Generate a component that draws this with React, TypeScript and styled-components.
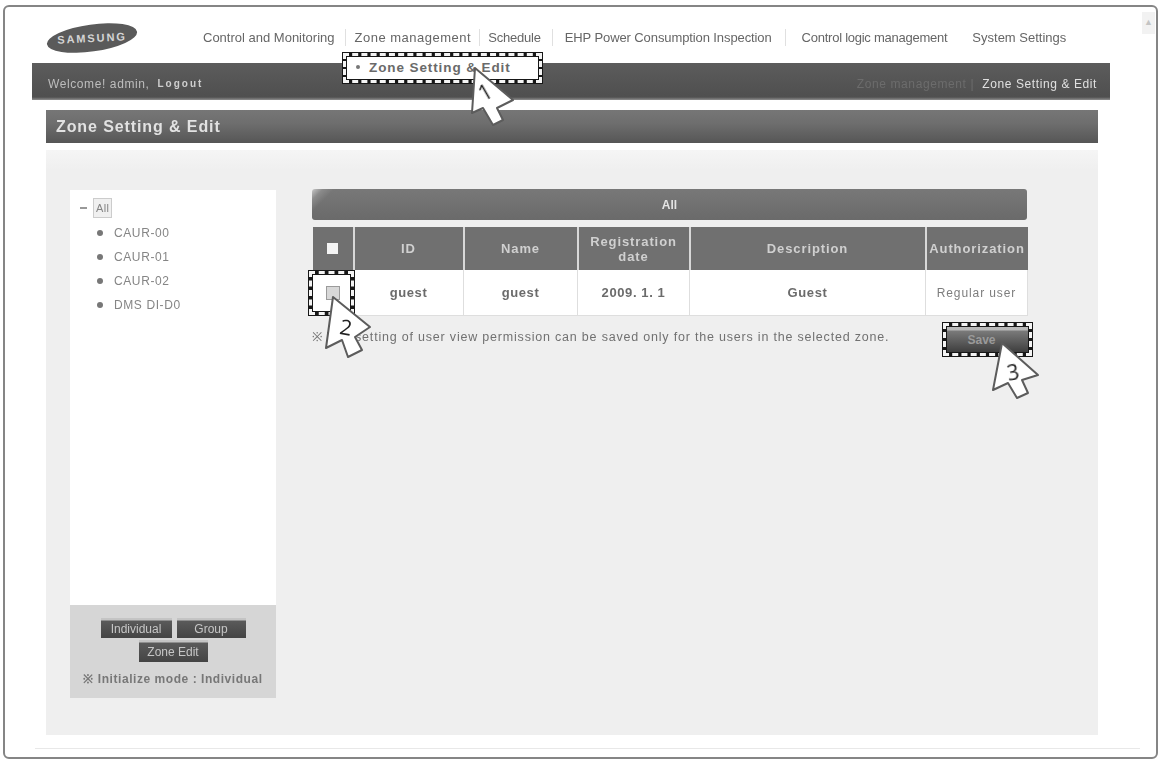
import React from "react";
import styled, { createGlobalStyle } from "styled-components";

const Global = createGlobalStyle`
  html, body { margin: 0; padding: 0; background: #fff; }
  body { font-family: "Liberation Sans", Arial, sans-serif; overflow: hidden; }
`;

const Page = styled.div`
  position: relative;
  width: 1162px;
  height: 762px;
  padding: 5px 4px 3px 3px;
  box-sizing: border-box;
  filter: blur(0.6px);
  overflow: hidden;
`;

const Frame = styled.div`
  height: 100%;
  box-sizing: border-box;
  border: 2px solid #858585;
  border-radius: 6px;
  background: #fff;
  display: flex;
  flex-direction: column;
  position: relative;
`;

const Header = styled.header`
  height: 56px;
  flex: none;
  display: flex;
  align-items: flex-start;
  padding: 11px 0 0 41px;
  box-sizing: border-box;
`;

const LogoBox = styled.svg`
  width: 92px;
  height: 36px;
  flex: none;
  margin-top: 2px;
`;

const Nav = styled.nav`
  display: flex;
  align-items: center;
  height: 38px;
  margin-left: 65px;
`;

const NavItem = styled.span<{ $left: number; $spacing: number }>`
  margin-left: ${(p) => p.$left}px;
  flex: none;
  font-size: 13px;
  letter-spacing: ${(p) => p.$spacing}px;
  color: #666;
  white-space: nowrap;
`;

const NavSep = styled.i<{ $left: number }>`
  margin-left: ${(p) => p.$left}px;
  width: 1px;
  height: 17px;
  background: #e0e0e0;
  flex: none;
`;

const WelcomeBar = styled.div`
  height: 37px;
  flex: none;
  margin: 0 46px 0 27px;
  background: linear-gradient(#5c5c5c, #4f4f4f 92%, #8f8f8f);
  display: flex;
  align-items: center;
  justify-content: space-between;
  padding: 4px 13px 0 16px;
  box-sizing: border-box;
`;

const Welcome = styled.span`
  font-size: 12px;
  letter-spacing: 0.6px;
  color: #bdbdbd;
  display: flex;
  align-items: center;
  gap: 8px;
`;

const Logout = styled.b`
  font-size: 10px;
  color: #cfcfcf;
  letter-spacing: 2px;
`;

const Crumbs = styled.span`
  font-size: 12px;
  letter-spacing: 0.6px;
  color: #e0e0e0;
  display: flex;
  gap: 8px;
`;

const CrumbDim = styled.span`
  color: #6c6c6c;
`;

const Main = styled.main`
  flex: 1;
  margin: 10px 58px 0 41px;
  display: flex;
  flex-direction: column;
  gap: 7px;
`;

const TitleBar = styled.div`
  height: 33px;
  flex: none;
  background: linear-gradient(#767676, #6e6e6e 40%, #565656);
  font-size: 16px;
  font-weight: bold;
  letter-spacing: 0.9px;
  color: #e2e2e2;
  display: flex;
  align-items: center;
  padding-left: 10px;
`;

const Panel = styled.section`
  height: 585px;
  flex: none;
  background: linear-gradient(#f5f5f5, #efefef 20px);
  display: flex;
  gap: 36px;
  padding: 40px 0 0 24px;
  box-sizing: border-box;
`;

const Sidebar = styled.aside`
  width: 206px;
  height: 508px;
  display: flex;
  flex-direction: column;
`;

const TreeBox = styled.div`
  height: 415px;
  flex: none;
  background: #fff;
  padding: 6px 0 0 10px;
  box-sizing: border-box;
  font-size: 12px;
  letter-spacing: 0.6px;
  color: #858585;
`;

const TreeRoot = styled.div`
  display: flex;
  align-items: center;
  gap: 6px;
  height: 23px;
`;

const RootMark = styled.i`
  width: 7px;
  height: 2px;
  background: #999;
`;

const RootLabel = styled.span`
  border: 1px solid #ccc;
  background: #f0f0f0;
  padding: 3px 2px;
  font-size: 11px;
  letter-spacing: 0.3px;
`;

const TreeList = styled.ul`
  list-style: none;
  margin: 0;
  padding: 2px 0 0 17px;
`;

const TreeRow = styled.li`
  display: flex;
  align-items: center;
  gap: 11px;
  height: 24px;
`;

const Dot = styled.i`
  width: 6px;
  height: 6px;
  border-radius: 50%;
  background: #777;
`;

const ModeBox = styled.div`
  flex: 1;
  background: #d6d6d6;
  display: flex;
  flex-direction: column;
  align-items: center;
  padding-top: 13px;
  box-sizing: border-box;
`;

const BtnRow = styled.div`
  display: flex;
  justify-content: center;
  gap: 5px;
  margin-bottom: 2px;
`;

const GrayBtn = styled.span<{ $w: number; $h: number }>`
  width: ${(p) => p.$w}px;
  height: ${(p) => p.$h}px;
  box-sizing: border-box;
  background: linear-gradient(#c4c4c4 0, #c4c4c4 2px, #5a5a5a 3px, #444);
  font-size: 12px;
  padding-top: 2px;
  color: #c6c6c6;
  display: flex;
  align-items: center;
  justify-content: center;
  white-space: nowrap;
`;

const ModeText = styled.div`
  margin-top: 6px;
  font-size: 12px;
  font-weight: bold;
  letter-spacing: 0.55px;
  color: #777;
  white-space: nowrap;
`;

const Content = styled.div`
  width: 715px;
  margin-top: -1px;
  display: flex;
  flex-direction: column;
`;

const ZoneBar = styled.div`
  height: 31px;
  flex: none;
  border-radius: 3px;
  background:
    linear-gradient(135deg, #c8c8c8 0, #8a8a8a 8px, transparent 16px),
    linear-gradient(#787878, #6a6a6a);
  font-size: 12px;
  font-weight: bold;
  color: #e4e4e4;
  display: flex;
  align-items: center;
  justify-content: center;
  margin-bottom: 7px;
`;

const Table = styled.table`
  width: 715px;
  table-layout: fixed;
  border-collapse: collapse;
`;

const Th = styled.th`
  height: 43px;
  padding: 0;
  background: #707070;
  border-left: 2px solid #d8d8d8;
  font-size: 13px;
  letter-spacing: 0.9px;
  line-height: 15px;
  color: #d0d0d0;
  white-space: nowrap;
  &:first-child { border-left: 0; }
`;

const Td = styled.td<{ $small?: boolean }>`
  height: 45px;
  padding: 0;
  background: #fff;
  border: 1px solid #dedede;
  text-align: center;
  font-size: ${(p) => (p.$small ? 12 : 13)}px;
  font-weight: ${(p) => (p.$small ? "normal" : "bold")};
  letter-spacing: ${(p) => (p.$small ? 0.9 : 0.6)}px;
  color: ${(p) => (p.$small ? "#7d7d7d" : "#6b6b6b")};
  white-space: nowrap;
  border-top: 0;
`;

const HeadBox = styled.i`
  display: block;
  width: 11px;
  height: 11px;
  margin: 0 auto;
  background: #f4f4f4;
`;

const RowBox = styled.i`
  display: block;
  width: 14px;
  height: 14px;
  margin: 0 auto;
  box-sizing: border-box;
  border: 1px solid #9b9b9b;
  background: #d8d8d8;
`;

const NoteRow = styled.div`
  margin-top: 12px;
  font-size: 12.5px;
  letter-spacing: 0.8px;
  color: #717171;
  white-space: nowrap;
`;

const ScrollTop = styled.div`
  position: absolute;
  right: 1px;
  top: 5px;
  width: 13px;
  height: 22px;
  background: #f2f2f2;
  color: #c4c4c4;
  font-size: 9px;
  text-align: center;
  line-height: 20px;
`;

const FootLine = styled.div`
  position: absolute;
  left: 30px;
  right: 16px;
  bottom: 8px;
  height: 1px;
  background: #e8e8e8;
`;

const Highlight = styled.div<{ $x: number; $y: number; $w: number; $h: number }>`
  position: absolute;
  left: ${(p) => p.$x}px;
  top: ${(p) => p.$y}px;
  width: ${(p) => p.$w}px;
  height: ${(p) => p.$h}px;
  box-sizing: border-box;
  border: 5px solid #171717;
  &::before {
    content: "";
    position: absolute;
    inset: -4px;
    border: 3px dashed #f4f4f4;
    pointer-events: none;
  }
`;

const MenuInner = styled.div`
  height: 100%;
  background: #fff;
  display: flex;
  align-items: center;
  padding: 0 0 2px 9px;
  box-sizing: border-box;
  gap: 9px;
  font-size: 13.5px;
  font-weight: bold;
  letter-spacing: 0.9px;
  color: #6a6a6a;
  white-space: nowrap;
`;

const Bullet = styled.i`
  width: 4px;
  height: 4px;
  border-radius: 50%;
  background: #777;
`;

const SaveBtn = styled.div`
  position: absolute;
  left: 947px;
  top: 327px;
  width: 81px;
  height: 25px;
  background: linear-gradient(#b9b9b9 0, #b9b9b9 3px, #7a7a7a 4px, #3e3e3e);
  color: #9a9a9a;
  font-size: 12px;
  font-weight: bold;
  display: flex;
  align-items: center;
  justify-content: center;
  padding-right: 12px;
  box-sizing: border-box;
`;

const CursorSvg = styled.svg<{ $x: number; $y: number }>`
  position: absolute;
  left: ${(p) => p.$x}px;
  top: ${(p) => p.$y}px;
  width: 80px;
  height: 80px;
  overflow: visible;
`;

const CursorNum = styled.text`
  font-family: "Open Sans", sans-serif;
  font-size: 21px;
  fill: #222;
`;

const Cursor: React.FC<{ x: number; y: number; pts: string; n: string; nx: number; ny: number; rot: number }> = ({ x, y, pts, n, nx, ny, rot }) => (
  <CursorSvg $x={x} $y={y} viewBox="0 0 80 80">
    <polygon points={pts} fill="#fff" stroke="#5c5c5c" strokeWidth="2" strokeLinejoin="round" />
    <CursorNum x={nx} y={ny} textAnchor="middle" transform={`rotate(${rot} ${nx} ${ny - 8})`}>{n}</CursorNum>
  </CursorSvg>
);

const navItems: [string, number, number][] = [
  ["Control and Monitoring", 0, 0.0],
  ["|", 10, 0],
  ["Zone management", 9, 0.5],
  ["|", 8, 0],
  ["Schedule", 8, -0.2],
  ["|", 11, 0],
  ["EHP Power Consumption Inspection", 12, -0.1],
  ["|", 13, 0],
  ["Control logic management", 16, -0.25],
  ["System Settings", 25, 0],
];

const tree = ["CAUR-00", "CAUR-01", "CAUR-02", "DMS DI-D0"];
const cols = [41, 110, 114, 112, 236, 102];

export default function App() {
  return (
    <>
      <Global />
      <Page>
        <Frame>
          <Header>
            <LogoBox viewBox="0 0 92 36">
              <ellipse cx="46" cy="18" rx="45.5" ry="13.5" transform="rotate(-8 46 18)" fill="#5a5a5a" />
              <text x="46" y="22" textAnchor="middle" fontFamily="Liberation Sans, sans-serif" fontWeight="bold" fontSize="11" letterSpacing="1.9" fill="#d4d4d4" transform="rotate(-3 46 18)">SAMSUNG</text>
            </LogoBox>
            <Nav>
              {navItems.map(([t, l, s], i) =>
                t === "|" ? (
                  <NavSep key={i} $left={l} />
                ) : (
                  <NavItem key={i} $left={l} $spacing={s}>{t}</NavItem>
                )
              )}
            </Nav>
          </Header>
          <WelcomeBar>
            <Welcome>Welcome! admin, <Logout>Logout</Logout></Welcome>
            <Crumbs><CrumbDim>Zone management |</CrumbDim> Zone Setting &amp; Edit</Crumbs>
          </WelcomeBar>
          <Main>
            <TitleBar>Zone Setting &amp; Edit</TitleBar>
            <Panel>
              <Sidebar>
                <TreeBox>
                  <TreeRoot><RootMark /><RootLabel>All</RootLabel></TreeRoot>
                  <TreeList>
                    {tree.map((t) => (
                      <TreeRow key={t}><Dot />{t}</TreeRow>
                    ))}
                  </TreeList>
                </TreeBox>
                <ModeBox>
                  <BtnRow>
                    <GrayBtn $w={71} $h={20}>Individual</GrayBtn>
                    <GrayBtn $w={69} $h={20}>Group</GrayBtn>
                  </BtnRow>
                  <BtnRow>
                    <GrayBtn $w={69} $h={22}>Zone Edit</GrayBtn>
                  </BtnRow>
                  <ModeText>※ Initialize mode : Individual</ModeText>
                </ModeBox>
              </Sidebar>
              <Content>
                <ZoneBar>All</ZoneBar>
                <Table>
                  <colgroup>
                    {cols.map((w, i) => <col key={i} width={w} />)}
                  </colgroup>
                  <thead>
                    <tr>
                      <Th><HeadBox /></Th>
                      <Th>ID</Th>
                      <Th>Name</Th>
                      <Th>Registration<br />date</Th>
                      <Th>Description</Th>
                      <Th>Authorization</Th>
                    </tr>
                  </thead>
                  <tbody>
                    <tr>
                      <Td><RowBox /></Td>
                      <Td>guest</Td>
                      <Td>guest</Td>
                      <Td>2009. 1. 1</Td>
                      <Td>Guest</Td>
                      <Td $small>Regular user</Td>
                    </tr>
                  </tbody>
                </Table>
                <NoteRow>※ The setting of user view permission can be saved only for the users in the selected zone.</NoteRow>
              </Content>
            </Panel>
          </Main>
          <FootLine />
          <ScrollTop>▲</ScrollTop>
        </Frame>

        <Highlight $x={342} $y={52} $w={201} $h={32}>
          <MenuInner><Bullet />Zone Setting &amp; Edit</MenuInner>
        </Highlight>
        <Highlight $x={308} $y={270} $w={47} $h={46} />
        <SaveBtn>Save</SaveBtn>
        <Highlight $x={942} $y={322} $w={91} $h={35} />
        <Cursor x={465} y={60} pts="10,8 48,40 32,48 38,60 28,65 18,48 7,53" n="1" nx={20} ny={40} rot={-30} />
        <Cursor x={320} y={290} pts="13,7 50,37 35,47 42,60 28,67 22,50 6,58" n="2" nx={26} ny={45} rot={10} />
        <Cursor x={990} y={335} pts="12,8 48,40 32,45 38,58 27,63 18,48 3,55" n="3" nx={23} ny={45} rot={-10} />
      </Page>
    </>
  );
}
